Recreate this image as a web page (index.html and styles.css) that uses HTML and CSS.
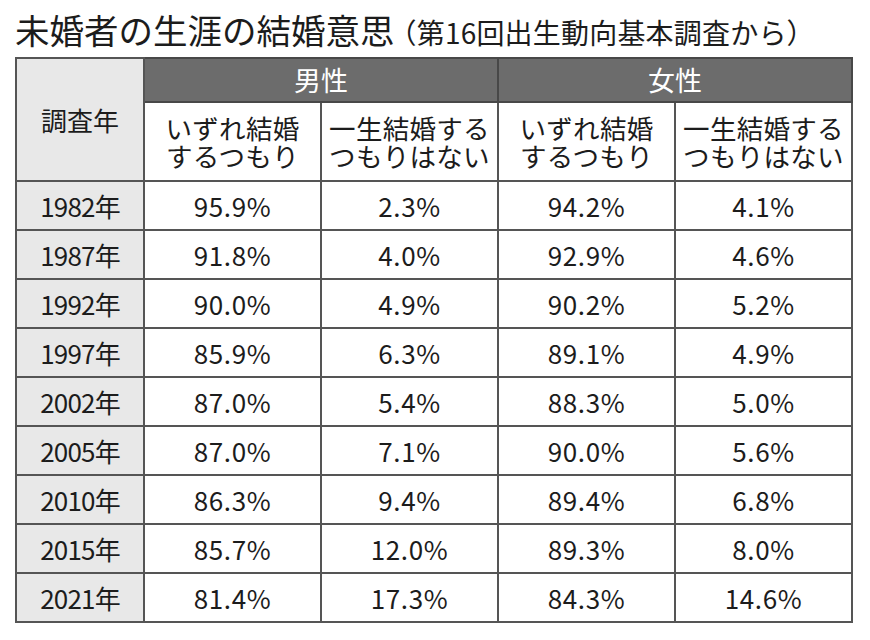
FILE: index.html
```html
<!DOCTYPE html>
<html lang="ja">
<head>
<meta charset="utf-8">
<link rel="stylesheet" href="styles.css">
</head>
<body>
<div class="page">
  <h1 class="title"><span class="main">未婚者の生涯の結婚意思</span><span class="sub">（第16回出生動向基本調査から）</span></h1>
  <table class="tbl">
    <colgroup>
      <col class="c-year"><col class="c-val"><col class="c-val"><col class="c-val"><col class="c-val">
    </colgroup>
    <thead>
      <tr class="h1">
        <th class="year-head" rowspan="2">調査年</th>
        <th class="sex" colspan="2">男性</th>
        <th class="sex" colspan="2">女性</th>
      </tr>
      <tr class="h2">
        <th>いずれ結婚<br>するつもり</th>
        <th>一生結婚する<br>つもりはない</th>
        <th>いずれ結婚<br>するつもり</th>
        <th>一生結婚する<br>つもりはない</th>
      </tr>
    </thead>
    <tbody>
      <tr><th>1982年</th><td>95.9%</td><td>2.3%</td><td>94.2%</td><td>4.1%</td></tr>
      <tr><th>1987年</th><td>91.8%</td><td>4.0%</td><td>92.9%</td><td>4.6%</td></tr>
      <tr><th>1992年</th><td>90.0%</td><td>4.9%</td><td>90.2%</td><td>5.2%</td></tr>
      <tr><th>1997年</th><td>85.9%</td><td>6.3%</td><td>89.1%</td><td>4.9%</td></tr>
      <tr><th>2002年</th><td>87.0%</td><td>5.4%</td><td>88.3%</td><td>5.0%</td></tr>
      <tr><th>2005年</th><td>87.0%</td><td>7.1%</td><td>90.0%</td><td>5.6%</td></tr>
      <tr><th>2010年</th><td>86.3%</td><td>9.4%</td><td>89.4%</td><td>6.8%</td></tr>
      <tr><th>2015年</th><td>85.7%</td><td>12.0%</td><td>89.3%</td><td>8.0%</td></tr>
      <tr><th>2021年</th><td>81.4%</td><td>17.3%</td><td>84.3%</td><td>14.6%</td></tr>
    </tbody>
  </table>
</div>
</body>
</html>
```

FILE: styles.css
```css
html, body {
  margin: 0;
  padding: 0;
  background: #ffffff;
}
body {
  font-family: "Noto Sans CJK JP", "Noto Sans", sans-serif;
  color: #1c1c1c;
}
.page {
  padding: 9px 0 0 15px;
}
.title {
  margin: 0;
  height: 48px;
  display: flex;
  align-items: baseline;
  font-weight: 400;
  white-space: nowrap;
  line-height: 40px;
}
.title .main {
  font-size: 34.5px;
}
.title .sub {
  font-size: 28px;
  letter-spacing: 0.2px;
  margin-left: -6px;
}
.tbl {
  border-collapse: collapse;
  width: 837px;
  table-layout: fixed;
}
.c-year { width: 128px; }
.c-val { width: 177px; }
.tbl th, .tbl td {
  border: 2px solid #555555;
  padding: 0;
  text-align: center;
  font-weight: 400;
  vertical-align: middle;
}
.h1 th.sex {
  background: #6c6c6c;
  color: #ffffff;
  height: 42px;
  font-size: 27px;
  line-height: 30px;
  border-color: #484848;
}
.year-head {
  background: #e8e8e8;
  font-size: 26px;
}
.h2 th {
  height: 77px;
  font-size: 26.5px;
  line-height: 28px;
  letter-spacing: 0.3px;
}
tbody th {
  background: #e8e8e8;
  height: 47px;
  font-size: 26px;
  letter-spacing: -0.8px;
}
tbody td {
  height: 47px;
  font-size: 26px;
  letter-spacing: 0.6px;
}
```
